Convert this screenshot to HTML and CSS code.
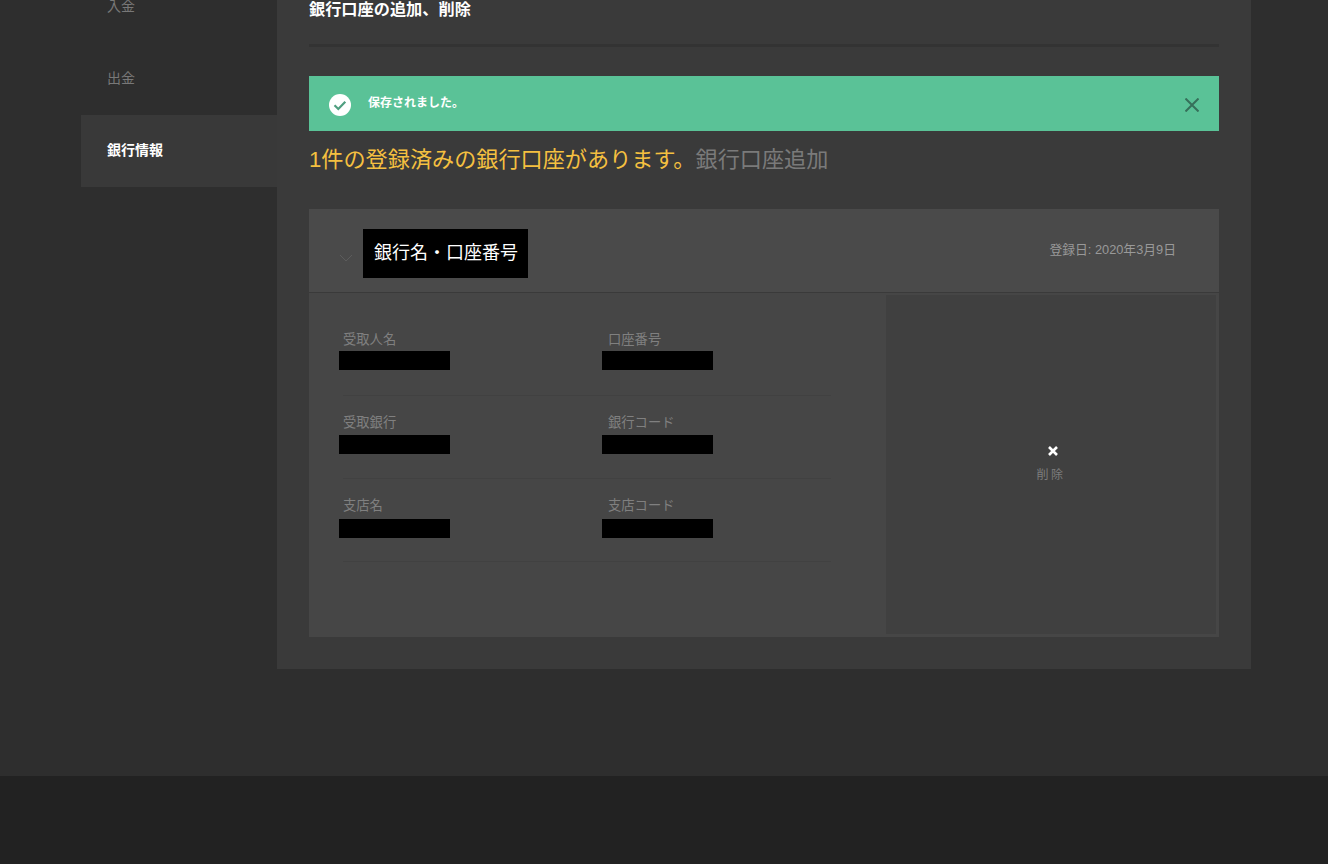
FILE: index.html
```html
<!DOCTYPE html>
<html lang="ja">
<head>
<meta charset="UTF-8">
<title>銀行情報</title>
<link rel="stylesheet" href="styles.css">
</head>
<body>

<div class="wrapper">
    <nav class="side">
        <a href="#">入金</a>
        <a href="#">出金</a>
        <a href="#" class="active">銀行情報</a>
    </nav>

    <main class="content">
        <h2 class="title">銀行口座の追加、削除</h2>

        <div class="alert">
            <svg class="alert-check" width="22" height="22" viewBox="0 0 22 22">
                <circle cx="11" cy="11" r="11" fill="#fff"/>
                <path d="M5.5 11.3l3.8 3.7 7-7.2" fill="none" stroke="#4f9f80" stroke-width="2.2"/>
            </svg>
            <span class="alert-text">保存されました。</span>
            <svg class="alert-close" width="14" height="14" viewBox="0 0 14 14">
                <path d="M0.5 0.5l13 13M13.5 0.5l-13 13" fill="none" stroke="#36705a" stroke-width="2"/>
            </svg>
        </div>

        <p class="count">
            <span class="count-num">1件の登録済みの銀行口座があります。</span><a href="#" class="count-add">銀行口座追加</a>
        </p>

        <div class="card">
            <div class="card-head">
                <svg class="chevron" width="14" height="8" viewBox="0 0 14 8">
                    <path d="M1 1l6 6 6-6" fill="none" stroke="#5c5c5c" stroke-width="1"/>
                </svg>
                <span class="bank-name">銀行名・口座番号</span>
                <span class="reg-date">登録日: 2020年3月9日</span>
            </div>
            <div class="card-body">
                <div class="fields">
                    <div class="field-row">
                        <div class="field"><label>受取人名</label><div class="mask"></div></div>
                        <div class="field"><label>口座番号</label><div class="mask"></div></div>
                    </div>
                    <div class="field-row">
                        <div class="field"><label>受取銀行</label><div class="mask"></div></div>
                        <div class="field"><label>銀行コード</label><div class="mask"></div></div>
                    </div>
                    <div class="field-row">
                        <div class="field"><label>支店名</label><div class="mask"></div></div>
                        <div class="field"><label>支店コード</label><div class="mask"></div></div>
                    </div>
                </div>
                <div class="delete">
                    <svg class="delete-icon" width="10" height="10" viewBox="0 0 10 10">
                        <path d="M1 1l8 8M9 1l-8 8" fill="none" stroke="#fff" stroke-width="2.6"/>
                    </svg>
                    <span class="delete-text">削除</span>
                </div>
            </div>
        </div>
    </main>
</div>

<footer class="footer"></footer>

</body>
</html>
```

FILE: styles.css
```css
html, body {
    height: 864px;
    overflow: hidden;
}
body {
    margin: 0;
    background-color: #222;
    font-family: "Liberation Sans", "Noto Sans CJK JP", sans-serif;
    color: #fff;
}
a {
    text-decoration: none;
}

/* page is scrolled down a bit in the shot */
.wrapper {
    display: flex;
    height: 776px;
    padding-left: 81px;
    background-color: #2e2e2e;
    box-sizing: border-box;
    overflow: hidden;
}
.side {
    width: 196px;
    flex-shrink: 0;
    margin-top: -29px;
}
.side a {
    display: flex;
    align-items: center;
    height: 72px;
    padding: 0 0 5px 26px;
    box-sizing: border-box;
    font-size: 14px;
    color: #787878;
}
.side a.active {
    background-color: #393939;
    color: #fff;
    font-weight: bold;
}

.content {
    width: 974px;
    height: 669px;
    padding: 0 32px;
    box-sizing: border-box;
    background-color: #3a3a3a;
}
.title {
    margin: 0;
    height: 44px;
    border-bottom: 3px solid #333;
    font-size: 16.2px;
    line-height: 19px;
    font-weight: bold;
}

.alert {
    display: flex;
    align-items: center;
    height: 55px;
    margin-top: 29px;
    padding: 2px 20px 0 20px;
    box-sizing: border-box;
    background-color: #5ac297;
}
.alert-text {
    margin-left: 17px;
    margin-top: -7px;
    font-size: 12px;
    font-weight: bold;
}
.alert-close {
    margin-left: auto;
    margin-top: 1px;
}

.count {
    margin: 14px 0 0;
    height: 34px;
    font-size: 22.15px;
    line-height: 30px;
}
.count-num {
    color: #f5c040;
}
.count-add {
    color: #7a7a7a;
}

.card {
    height: 428px;
    margin-top: 30px;
    background-color: #464646;
}
.card-head {
    display: flex;
    align-items: center;
    height: 84px;
    padding: 0 43px 0 30px;
    box-sizing: border-box;
    border-bottom: 1px solid #3a3a3a;
    background-color: #4a4a4a;
}
.chevron {
    margin-top: 14px;
}
.bank-name {
    margin-left: 10px;
    margin-top: 6px;
    padding: 0 10px 0 11px;
    height: 49px;
    line-height: 49px;
    background-color: #000;
    font-size: 18px;
}
.reg-date {
    margin-left: auto;
    margin-top: -4px;
    font-size: 12.8px;
    color: #999;
}

.card-body {
    display: flex;
    height: 344px;
}
.fields {
    width: 577px;
    flex-shrink: 0;
    padding: 20px 0 0 34px;
    box-sizing: border-box;
}
.field-row {
    display: flex;
    width: 488px;
    height: 83px;
    border-bottom: 1px solid #414141;
    box-sizing: border-box;
}
.field {
    flex: none;
    width: 263px;
    margin-left: -4px;
    margin-right: 4px;
}
.field label {
    display: block;
    height: 21px;
    margin-top: 17px;
    padding-left: 4px;
    font-size: 13.3px;
    line-height: 19px;
    color: #808080;
}
.field:last-child {
    width: 225px;
}
.field:last-child label {
    padding-left: 6px;
}
.mask {
    width: 111px;
    height: 19px;
    background-color: #000;
}
/* redaction boxes in the shot sit 84px apart, text rows 83px */
.field-row:nth-child(2) .mask {
    margin-top: 1px;
}
.field-row:nth-child(3) .mask {
    margin-top: 2px;
}

.delete {
    display: flex;
    flex-direction: column;
    align-items: center;
    width: 330px;
    height: 339px;
    margin-top: 2px;
    padding-top: 151px;
    box-sizing: border-box;
    background-color: #404040;
}
.delete-icon {
    margin-left: 4px;
}
.delete-text {
    margin-top: 9px;
    font-size: 12px;
    letter-spacing: 2.5px;
    color: #7d7d7d;
}

.footer {
    height: 88px;
    background-color: #222;
}
```
